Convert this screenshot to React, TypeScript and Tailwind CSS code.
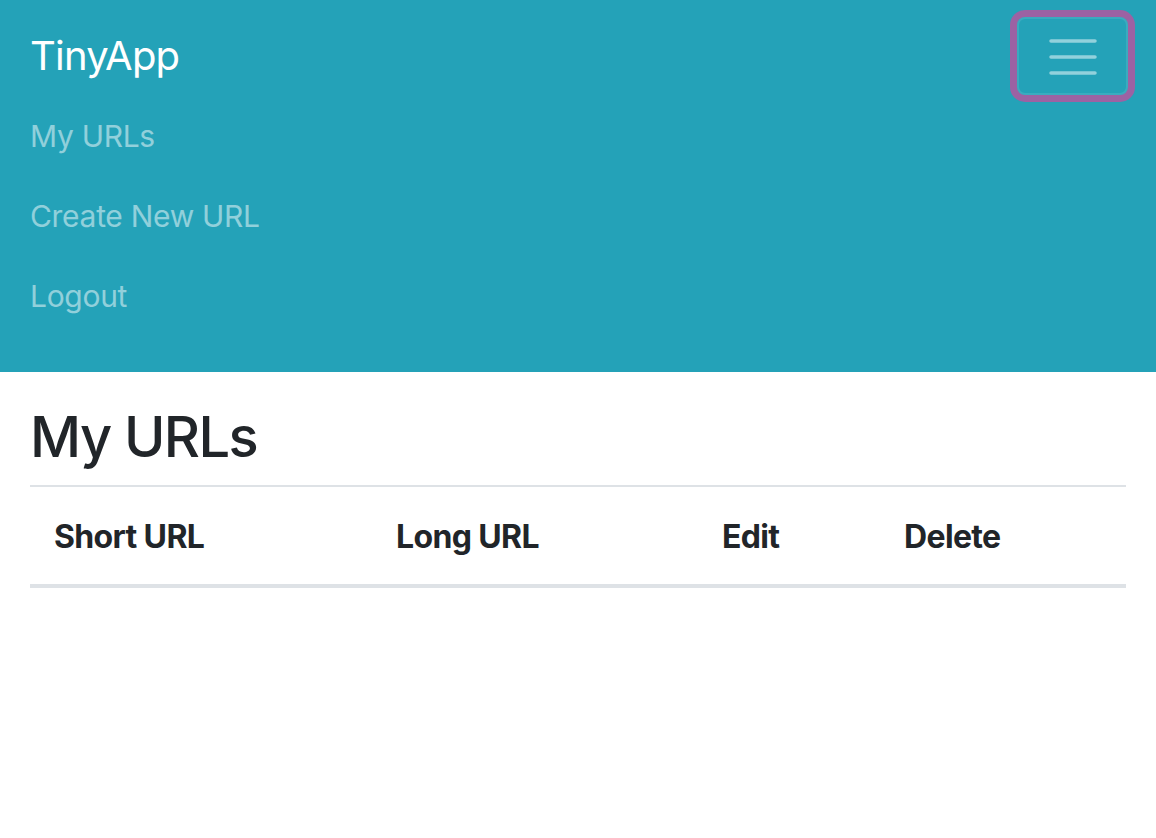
import React from 'react';

const navLinks = ['My URLs', 'Create New URL', 'Logout'];

const columns = [
  { label: 'Short URL', width: 'w-[342px]' },
  { label: 'Long URL', width: 'w-[326px]' },
  { label: 'Edit', width: 'w-[182px]' },
  { label: 'Delete', width: '' },
];

const App: React.FC = () => {
  return (
    <div className="min-h-[838px] bg-white font-['Inter',sans-serif] text-[#212529]">
      {/* Navbar (collapsed menu open) */}
      <header className="bg-[#24a2b8] pl-[30px] pr-[28px] pt-4 pb-9">
        <div className="flex h-20 items-center justify-between">
          <a className="text-[40px] leading-[1.5] tracking-[-0.02em] text-white">TinyApp</a>
          <button className="flex h-[78px] w-[111px] items-center justify-center rounded-[8px] border-2 border-white/10 ring-[7px] ring-[#9c62a3]">
            <svg width="50" height="40" viewBox="0 0 50 40">
              <path d="M3 5h44M3 21h44M3 37h44" stroke="rgba(255,255,255,0.5)" strokeWidth="3.5" strokeLinecap="round" />
            </svg>
          </button>
        </div>
        <ul>
          {navLinks.map((link) => (
            <li key={link} className="flex h-20 items-center text-[30px] leading-[1.5] tracking-[-0.01em] text-white/50">
              {link}
            </li>
          ))}
        </ul>
      </header>

      <main className="px-[30px] pt-8">
        <h3 className="mb-[14px] text-[56px] font-medium leading-[1.2] tracking-[-0.028em]">My URLs</h3>
        <table className="w-full border-collapse">
          <thead>
            <tr className="border-t-2 border-b-4 border-[#dee2e6]">
              {columns.map((col) => (
                <th key={col.label} className={`${col.width} px-6 pt-[26px] pb-[23px] text-left text-[32px] font-bold leading-[1.5] tracking-[-0.02em]`}>
                  {col.label}
                </th>
              ))}
            </tr>
          </thead>
        </table>
      </main>
    </div>
  );
};

export default App;
